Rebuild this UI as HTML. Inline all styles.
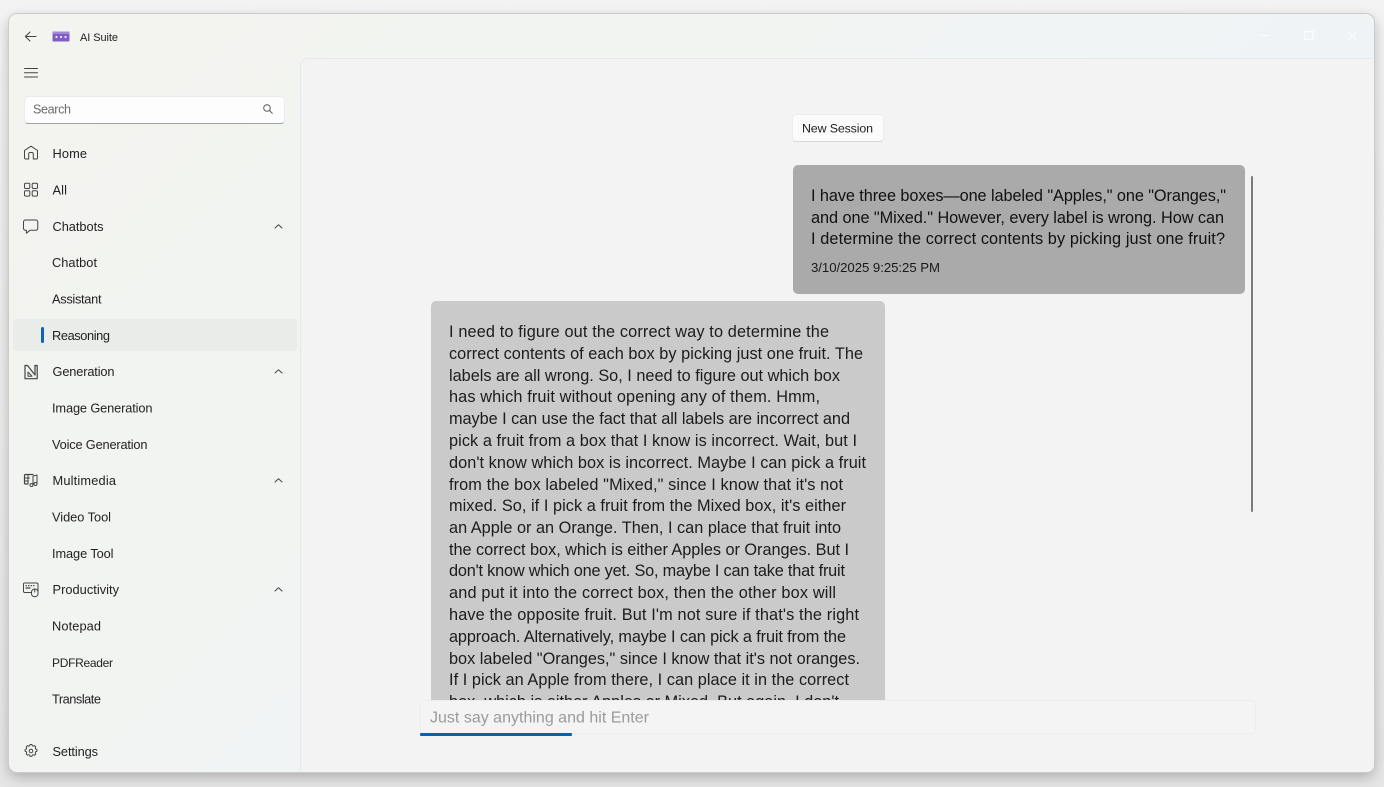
<!DOCTYPE html>
<html lang="en">
<head>
<meta charset="utf-8">
<title>AI Suite</title>
<style>
html,body{margin:0;padding:0;width:1384px;height:787px;overflow:hidden;background:#e9e9e9;}
body{position:relative;background:linear-gradient(#f3f3f3 0,#eeeeee 40%,#e6e6e6 100%);font-family:"Liberation Sans",sans-serif;}
div{position:absolute;box-sizing:border-box;}
#win{left:9px;top:14px;width:1365px;height:758px;border-radius:8px;background:linear-gradient(135deg,#f3f3ef 0%,#f2f4f2 35%,#eef3f7 70%,#f0f4f8 100%);box-shadow:0 0 0 1px #cbcbcb,0 5px 14px rgba(0,0,0,.26);}
#pane{left:300px;top:58px;width:1074px;height:714px;background:#f3f3f3;border-top:1px solid #e6e9ea;border-left:1px solid #e6e9ea;border-top-left-radius:8px;border-bottom-right-radius:7px;}
#search{left:24px;top:96px;width:261px;height:28px;background:#fdfdfd;border-radius:4px;border:1px solid #ececec;border-bottom:1.5px solid #a2a2a2;}
#sel{left:13px;top:319px;width:284px;height:32px;background:#eaecea;border-radius:4px;}
#ind{left:41px;top:327px;width:2.5px;height:16px;background:#0f62b4;border-radius:2px;}
#btn{left:792px;top:114px;width:92px;height:28px;background:#fbfbfb;border:1px solid #ececec;border-bottom-color:#d8d8d8;border-radius:4px;}
#b1{left:793px;top:165px;width:452px;height:129px;background:#aaaaaa;border-radius:5px;}
#b2{left:431px;top:301px;width:454px;height:420px;background:#cacaca;border-radius:5px 5px 0 0;}
#cover{left:420px;top:700px;width:836px;height:71px;background:#f3f3f3;}
#input{left:420px;top:700px;width:836px;height:34px;background:#f4f4f4;border:1.5px solid #ededed;border-radius:4px;}
#prog{left:420px;top:733px;width:152px;height:3px;background:#0f5fb0;border-radius:1px;}
#scroll{left:1250.5px;top:176px;width:2px;height:336px;background:#7a7a7a;border-radius:1px;}
svg{position:absolute;left:0;top:0;}
text{font-family:"Liberation Sans",sans-serif;}
.n{font-size:12.8px;fill:#222;}
.m{font-size:16.3px;fill:#111;}
.g{font-size:16.3px;fill:#1c1c1c;}
.i{fill:none;stroke:#444;stroke-width:1;stroke-linejoin:round;stroke-linecap:round;}
</style>
</head>
<body>
<div id="win"></div>
<div id="pane"></div>
<div id="search"></div>
<div id="sel"></div>
<div id="ind"></div>
<div id="btn"></div>
<div id="b1"></div>
<div id="b2"></div>
<div id="scroll"></div>

<svg width="1384" height="787" viewBox="0 0 1384 787">
<!-- bubble 1 -->
<text class="m" x="811" y="201" textLength="415" lengthAdjust="spacing">I have three boxes—one labeled "Apples," one "Oranges,"</text>
<text class="m" x="811" y="223" textLength="413" lengthAdjust="spacing">and one "Mixed." However, every label is wrong. How can</text>
<text class="m" x="811" y="244" textLength="414" lengthAdjust="spacing">I determine the correct contents by picking just one fruit?</text>
<text x="811" y="272" font-size="13.2" fill="#1a1a1a" textLength="129" lengthAdjust="spacing">3/10/2025 9:25:25 PM</text>
<!-- bubble 2 -->
<text class="g" x="449" y="337" textLength="380" lengthAdjust="spacing">I need to figure out the correct way to determine the</text>
<text class="g" x="449" y="359" textLength="414" lengthAdjust="spacing">correct contents of each box by picking just one fruit. The</text>
<text class="g" x="449" y="381" textLength="391" lengthAdjust="spacing">labels are all wrong. So, I need to figure out which box</text>
<text class="g" x="449" y="402" textLength="371" lengthAdjust="spacing">has which fruit without opening any of them. Hmm,</text>
<text class="g" x="449" y="424" textLength="401" lengthAdjust="spacing">maybe I can use the fact that all labels are incorrect and</text>
<text class="g" x="449" y="446" textLength="408" lengthAdjust="spacing">pick a fruit from a box that I know is incorrect. Wait, but I</text>
<text class="g" x="449" y="468" textLength="417" lengthAdjust="spacing">don't know which box is incorrect. Maybe I can pick a fruit</text>
<text class="g" x="449" y="490" textLength="394" lengthAdjust="spacing">from the box labeled "Mixed," since I know that it's not</text>
<text class="g" x="449" y="511" textLength="397" lengthAdjust="spacing">mixed. So, if I pick a fruit from the Mixed box, it's either</text>
<text class="g" x="449" y="533" textLength="392" lengthAdjust="spacing">an Apple or an Orange. Then, I can place that fruit into</text>
<text class="g" x="449" y="555" textLength="400" lengthAdjust="spacing">the correct box, which is either Apples or Oranges. But I</text>
<text class="g" x="449" y="576" textLength="396" lengthAdjust="spacing">don't know which one yet. So, maybe I can take that fruit</text>
<text class="g" x="449" y="598" textLength="387" lengthAdjust="spacing">and put it into the correct box, then the other box will</text>
<text class="g" x="449" y="620" textLength="410" lengthAdjust="spacing">have the opposite fruit. But I'm not sure if that's the right</text>
<text class="g" x="449" y="642" textLength="397" lengthAdjust="spacing">approach. Alternatively, maybe I can pick a fruit from the</text>
<text class="g" x="449" y="664" textLength="411" lengthAdjust="spacing">box labeled "Oranges," since I know that it's not oranges.</text>
<text class="g" x="449" y="685" textLength="400" lengthAdjust="spacing">If I pick an Apple from there, I can place it in the correct</text>
<text class="g" x="449" y="707" textLength="390" lengthAdjust="spacing">box, which is either Apples or Mixed. But again, I don't</text>
</svg>

<div id="cover"></div>
<div id="input"></div>
<div id="prog"></div>

<svg width="1384" height="787" viewBox="0 0 1384 787">
<text x="430" y="722.5" font-size="16" fill="#9a9a9a" textLength="219" lengthAdjust="spacing">Just say anything and hit Enter</text>
<text x="802" y="132.5" font-size="12.4" fill="#222" textLength="71" lengthAdjust="spacing">New Session</text>
<text x="80" y="41" font-size="11" fill="#222" textLength="38" lengthAdjust="spacing">AI Suite</text>
<text x="33" y="113.5" font-size="12.6" fill="#6b6b6b" textLength="38" lengthAdjust="spacing">Search</text>

<text class="n" x="52.5" y="158" textLength="34.5" lengthAdjust="spacing">Home</text>
<text class="n" x="52.5" y="194.5" textLength="14.5" lengthAdjust="spacing">All</text>
<text class="n" x="52.5" y="231" textLength="51" lengthAdjust="spacing">Chatbots</text>
<text class="n" x="52" y="267" textLength="45" lengthAdjust="spacing">Chatbot</text>
<text class="n" x="52" y="303.5" textLength="49.5" lengthAdjust="spacing">Assistant</text>
<text class="n" x="52" y="340" textLength="58" lengthAdjust="spacing">Reasoning</text>
<text class="n" x="52.5" y="376" textLength="62" lengthAdjust="spacing">Generation</text>
<text class="n" x="52" y="412.5" textLength="100.5" lengthAdjust="spacing">Image Generation</text>
<text class="n" x="52" y="449" textLength="95.5" lengthAdjust="spacing">Voice Generation</text>
<text class="n" x="52.5" y="485" textLength="63.5" lengthAdjust="spacing">Multimedia</text>
<text class="n" x="52" y="521.5" textLength="59" lengthAdjust="spacing">Video Tool</text>
<text class="n" x="52" y="558" textLength="61.5" lengthAdjust="spacing">Image Tool</text>
<text class="n" x="52.5" y="594" textLength="66.5" lengthAdjust="spacing">Productivity</text>
<text class="n" x="52" y="630.5" textLength="49" lengthAdjust="spacing">Notepad</text>
<text x="52" y="667" font-size="12" fill="#222" textLength="61" lengthAdjust="spacing">PDFReader</text>
<text class="n" x="52" y="703.5" textLength="49" lengthAdjust="spacing">Translate</text>
<text class="n" x="52.5" y="756" textLength="45.5" lengthAdjust="spacing">Settings</text>

<!-- back arrow -->
<path class="i" d="M36 36.5H25.5M30 32l-4.7 4.5 4.7 4.5"/>
<!-- logo -->
<rect x="52.5" y="31.5" width="17" height="10" rx="1" fill="#7f5cc8"/>
<rect x="52.5" y="31.5" width="17" height="2.5" fill="#a08ad8"/>
<circle cx="56.5" cy="37" r="1.1" fill="#efe8ff"/><circle cx="61" cy="37" r="1.1" fill="#efe8ff"/><circle cx="65.5" cy="37" r="1.1" fill="#efe8ff"/>
<!-- hamburger -->
<path class="i" d="M24.5 68.5H37.5M24.5 72.8H37.5M24.5 77H37.5"/>
<!-- search -->
<circle class="i" cx="267" cy="108" r="3.3" style="stroke:#555"/>
<path class="i" d="M269.6 110.6l2.7 2.7" style="stroke:#555"/>
<!-- home -->
<path class="i" d="M24.5 150.5L31 146.2l6.5 4.3v7.2a1.3 1.3 0 0 1-1.3 1.3h-2.9v-5.2a1.3 1.3 0 0 0-1.3-1.3h-2a1.3 1.3 0 0 0-1.3 1.3V159h-2.9a1.3 1.3 0 0 1-1.3-1.3z"/>
<!-- all -->
<rect class="i" x="24.5" y="183.2" width="5.3" height="5.3" rx="1.2"/><rect class="i" x="32.2" y="183.2" width="5.3" height="5.3" rx="1.2"/>
<rect class="i" x="24.5" y="190.8" width="5.3" height="5.3" rx="1.2"/><rect class="i" x="32.2" y="190.8" width="5.3" height="5.3" rx="1.2"/>
<!-- chat -->
<path class="i" d="M25.5 220h10.3a2 2 0 0 1 2 2v6.3a2 2 0 0 1-2 2h-5.8l-3.6 2.9v-2.9h-.9a2 2 0 0 1-2-2V222a2 2 0 0 1 2-2z"/>
<!-- generation -->
<path class="i" d="M25 365.5h2.5l7.5 9.5v-9.5h2.2v13.2H25z" style="stroke-width:1.2"/>
<path class="i" d="M28 372v4.2h4z"/>
<!-- multimedia -->
<path class="i" d="M33 474.5h-7.5a1 1 0 0 0-1 1v7.5a1 1 0 0 0 1 1H28" style="stroke-width:1.2"/>
<path class="i" d="M24.5 478h5M24.5 481h4M28 474.5v9.5"/>
<path class="i" d="M33 476v8M37 475v8M33 476l4-1"/>
<circle class="i" cx="31.5" cy="485" r="1.5"/><circle class="i" cx="35.5" cy="484" r="1.5"/>
<!-- productivity -->
<rect class="i" x="23.5" y="583" width="14.5" height="9.5" rx="1.2"/>
<path class="i" d="M26 585.7h.5M28.5 585.7h.5M31 585.7h.5M33.5 585.7h.5M26 588h4" style="stroke-width:1.2"/>
<rect x="31.5" y="589" width="6.5" height="7.8" rx="3.1" fill="#f0f3f5" stroke="#444" stroke-width="1"/>
<path class="i" d="M34.7 589v3"/>
<!-- settings -->
<path class="i" style="stroke-width:1.35" d="M29.7 745h2.6l.5 1.7 1.5.6 1.6-.8 1.8 1.8-.8 1.6.6 1.5 1.7.5v2.6l-1.7.5-.6 1.5.8 1.6-1.8 1.8-1.6-.8-1.5.6-.5 1.7h-2.6l-.5-1.7-1.5-.6-1.6.8-1.8-1.8.8-1.6-.6-1.5-1.7-.5v-2.6l1.7-.5.6-1.5-.8-1.6 1.8-1.8 1.6.8 1.5-.6z" transform="translate(8.68 208.12) scale(.72)"/>
<circle class="i" cx="31" cy="751" r="1.8"/>
<!-- chevrons -->
<path class="i" d="M275 228l3.5-3.2 3.5 3.2M275 373l3.5-3.2 3.5 3.2M275 482l3.5-3.2 3.5 3.2M275 591l3.5-3.2 3.5 3.2"/>
<!-- window controls -->
<path d="M1260 35.5h9" stroke="#fbfcfd" stroke-width="1.2" fill="none"/>
<rect x="1304.5" y="31.5" width="8.5" height="8" fill="none" stroke="#fbfcfd" stroke-width="1.2"/>
<path d="M1348 31.5l8.5 8.5M1356.5 31.5l-8.5 8.5" stroke="#fbfcfd" stroke-width="1.2" fill="none"/>
</svg>
</body>
</html>
